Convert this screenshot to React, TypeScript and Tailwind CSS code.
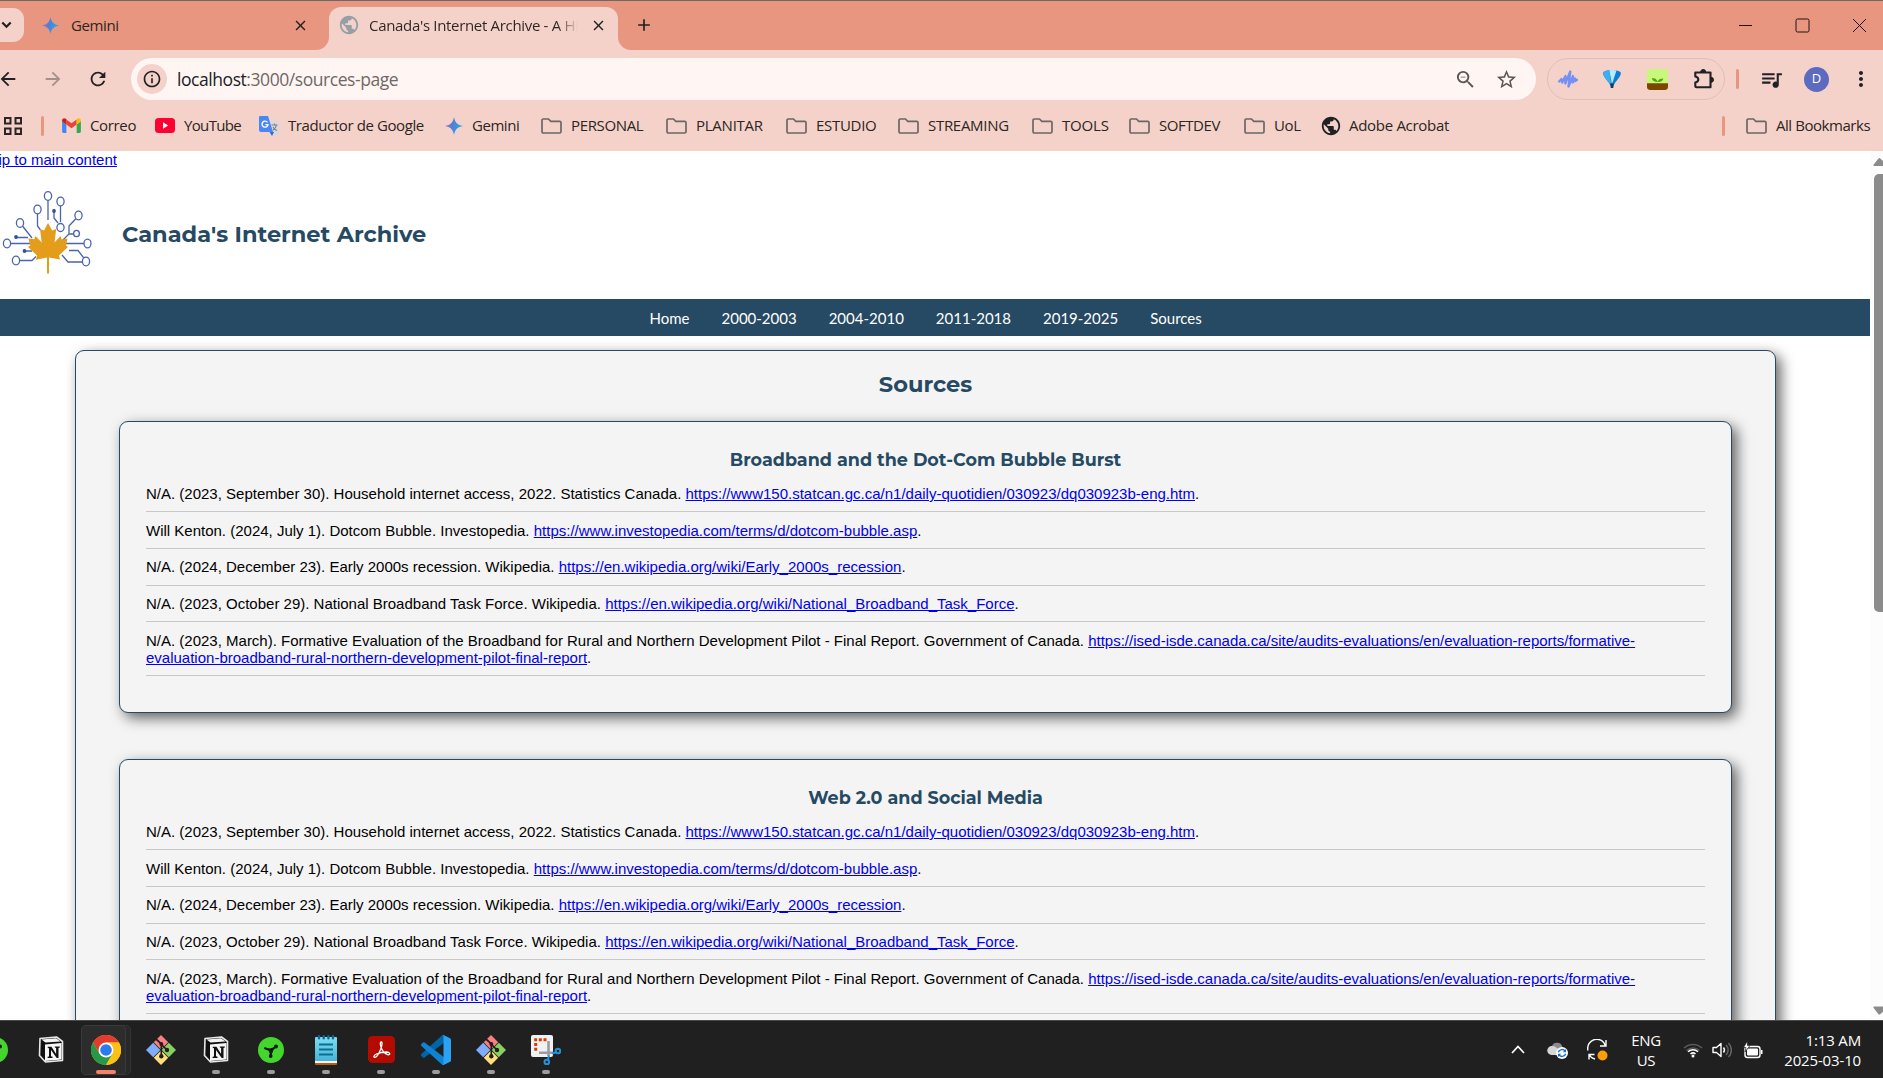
import React from "react";
import {
  MdArrowBack,
  MdArrowForward,
  MdRefresh,
  MdInfoOutline,
  MdStarBorder,
  MdZoomOut,
  MdQueueMusic,
  MdMoreVert,
  MdPublic,
  MdClose,
  MdAdd,
} from "react-icons/md";

const Gemini = ({ className }: { className: string }) => (
  <svg viewBox="0 0 20 20" className={className}>
    <defs>
      <linearGradient id="gem" x1="0" y1="0.4" x2="1" y2="0.6">
        <stop offset="0" stopColor="#b56fb0" />
        <stop offset="0.4" stopColor="#4f7fd8" />
        <stop offset="1" stopColor="#1fb0ea" />
      </linearGradient>
    </defs>
    <path fill="url(#gem)" d="M10 0c.9 5.8 4.200 9.100 10 10-5.800.9-9.100 4.200-10 10-.9-5.800-4.200-9.100-10-10 5.800-.9 9.100-4.200 10-10z" />
  </svg>
);

const Gmail = () => (
  <svg viewBox="0 0 20 16" className="h-[15px] w-[19px]">
    <path fill="#4285f4" d="M0 3.500 4.500 7v9H1.500A1.500 1.500 0 0 1 0 14.500z" />
    <path fill="#34a853" d="M20 3.500 15.500 7v9h3a1.500 1.500 0 0 0 1.500-1.500z" />
    <path fill="#ea4335" d="M4.500 1.500 10 5.600l5.500-4.100V7L10 11 4.500 7z" />
    <path fill="#c5221f" d="M0 2.500C0 .3 2.400-.6 4.500 1v6L0 3.600z" />
    <path fill="#fbbc04" d="M20 2.500c0-2.200-2.400-3.100-4.500-1.500v6L20 3.600z" />
  </svg>
);

const YouTube = () => (
  <svg viewBox="0 0 20 15" className="h-[15px] w-5">
    <rect width="20" height="15" rx="3.500" fill="#ff0033" />
    <path d="M8 4.300v6.400l5.200-3.200z" fill="#fff" />
  </svg>
);

const Translate = () => (
  <svg viewBox="0 0 20 20" className="h-5 w-5">
    <path d="M8 5h11a1 1 0 0 1 1 1v12a1 1 0 0 1-1 1h-8z" fill="#d9d9dc" />
    <path d="M10 15l3 5 2-4z" fill="#3367d6" />
    <path d="M1 0h8l5 16H2a2 2 0 0 1-2-2V1a1 1 0 0 1 1-1z" fill="#4a86f4" />
    <path d="M8.500 6.400A3 3 0 1 0 9 8.600H6.300" fill="none" stroke="#fff" strokeWidth="1.400" />
    <path d="M12.500 9h6M15.500 7.600V9m2 0c-.4 2.500-2 4-3.500 5m0-3c1 1.800 2.500 3 4 3.600" fill="none" stroke="#7d7f83" strokeWidth="1.100" />
  </svg>
);

const Folder = () => (
  <svg viewBox="0 0 21 16" className="h-4 w-[21px] shrink-0" fill="none" stroke="#6b6765" strokeWidth="1.700" strokeLinejoin="round">
    <path d="M2.300 1h5.200l2.300 2.300h8.900c.8 0 1.300.5 1.300 1.300v9c0 .8-.5 1.400-1.300 1.400H2.300c-.8 0-1.300-.6-1.300-1.400V2.300C1 1.500 1.500 1 2.300 1z" />
  </svg>
);

const bookmarks: { icon: React.ReactNode; label: string; width: string; text: string }[] = [
  { icon: <Gmail />, label: "Correo", width: "w-[93px]", text: "tracking-[-0.35px]" },
  { icon: <YouTube />, label: "YouTube", width: "w-[104px]", text: "tracking-[-0.65px]" },
  { icon: <Translate />, label: "Traductor de Google", width: "w-[186px]", text: "tracking-[-0.4px]" },
  { icon: <Gemini className="h-[18px] w-[18px]" />, label: "Gemini", width: "w-[96px]", text: "tracking-[-0.45px]" },
  { icon: <Folder />, label: "PERSONAL", width: "w-[125px]", text: "tracking-[-0.35px]" },
  { icon: <Folder />, label: "PLANITAR", width: "w-[120px]", text: "tracking-[-0.25px]" },
  { icon: <Folder />, label: "ESTUDIO", width: "w-[112px]", text: "tracking-[-0.3px]" },
  { icon: <Folder />, label: "STREAMING", width: "w-[134px]", text: "tracking-[-0.3px]" },
  { icon: <Folder />, label: "TOOLS", width: "w-[97px]", text: "tracking-[-0.2px]" },
  { icon: <Folder />, label: "SOFTDEV", width: "w-[115px]", text: "tracking-[-0.45px]" },
  { icon: <Folder />, label: "UoL", width: "w-[78px]", text: "tracking-[-0.4px]" },
  { icon: <MdPublic className="h-[22px] w-[22px] -mx-0.5 text-[#202124]" />, label: "Adobe Acrobat", width: "w-[130px]", text: "tracking-[-0.3px]" },
];

function TabStrip() {
  return (
    <div className="flex h-[50px] items-end border-t border-[#6c6a69] bg-[#e8967f] text-[15px] text-[#2b2523]">
      <div className="mb-2 flex h-[34px] w-6 items-center rounded-r-[11px] bg-[#f5d2c9]">
        <svg viewBox="0 0 11 8" className="ml-[1px] h-2 w-[11px]" fill="none" stroke="#202124" strokeWidth="2.200">
          <path d="M1.300 1.500l4.200 4.200 4.200-4.200" />
        </svg>
      </div>
      <div className="flex h-[50px] w-[292px] items-center pl-[18px]">
        <Gemini className="h-[17px] w-[17px]" />
        <span className="ml-3 tracking-[-0.4px]">Gemini</span>
        <MdClose className="ml-auto mr-[7px] h-[17px] w-[17px] text-[#202124]" />
      </div>
      <svg viewBox="0 0 13 13" className="h-[13px] w-[13px]">
        <path d="M13 0v13H0A13 13 0 0 0 13 0z" fill="#f5d2c9" />
      </svg>
      <div className="flex h-[43px] w-[289px] items-center rounded-t-[12px] bg-[#f5d2c9] pb-[7px] pl-[9px]">
        <MdPublic className="h-[22px] w-[22px] shrink-0 text-[#94a0a5]" />
        <div className="ml-[9px] w-[209px] overflow-hidden whitespace-nowrap bg-linear-to-r from-[#2b2523] from-90% to-transparent bg-clip-text tracking-[-0.32px] text-transparent">
          Canada's Internet Archive - A Hi
        </div>
        <MdClose className="ml-3 h-[17px] w-[17px] shrink-0 text-[#202124]" />
      </div>
      <svg viewBox="0 0 13 13" className="h-[13px] w-[13px]">
        <path d="M0 0v13h13A13 13 0 0 1 0 0z" fill="#f5d2c9" />
      </svg>
      <div className="flex h-[50px] w-[26px] items-center justify-center">
        <MdAdd className="h-5 w-5 shrink-0 text-[#202124]" />
      </div>
      <div className="ml-auto flex h-[50px] w-[145px] items-center justify-between pr-4">
        <svg viewBox="0 0 15 15" className="h-[15px] w-[15px]" stroke="#1b1512" fill="none">
          <path d="M1 7.500h13" />
        </svg>
        <svg viewBox="0 0 15 15" className="h-[15px] w-[15px]" stroke="#1b1512" fill="none">
          <rect x="1" y="1" width="13" height="13" rx="1.500" />
        </svg>
        <svg viewBox="0 0 15 15" className="h-[15px] w-[15px]" stroke="#1b1512" fill="none">
          <path d="M1 1l13 13M14 1L1 14" />
        </svg>
      </div>
    </div>
  );
}

function AddressRow() {
  return (
    <div className="flex h-[58px] items-center bg-[#f5d2c9] text-[#202124]">
      <MdArrowBack className="-ml-[3px] h-[22px] w-[22px]" />
      <MdArrowForward className="ml-[23px] h-[22px] w-[22px] text-[#a48f89]" />
      <MdRefresh className="ml-[23px] h-[22px] w-[22px]" />
      <div className="ml-[22px] flex h-[42px] w-[1405px] items-center rounded-full bg-[#fff6f4] pl-[6px] pr-[18px]">
        <div className="flex h-[30px] w-[30px] items-center justify-center rounded-full bg-[#f5d2c9]">
          <MdInfoOutline className="h-5 w-5" />
        </div>
        <div className="ml-[10px] text-[17.5px] tracking-[-0.44px] text-[#6f6866]">
          <span className="text-[#202124]">localhost</span>:3000/sources-page
        </div>
        <MdZoomOut className="ml-auto h-[23px] w-[23px] text-[#5c5654]" />
        <MdStarBorder className="ml-[18px] h-[23px] w-[23px] text-[#5c5654]" />
      </div>
      <div className="ml-[11px] flex h-[42px] w-[178px] items-center rounded-full border border-[#e2bfb6] pl-[10px]">
        <svg viewBox="0 0 20 20" className="h-5 w-5" fill="none" stroke="#7590f5" strokeWidth="2.300" strokeLinecap="round" strokeLinejoin="round">
          <path d="M1.200 12.500 3.500 10l.7 3.500L7.500 7l-.2 7.500L12.300 2.500 10.500 17.500 15 7l-.2 6.500L17 9.500l.3 2.500 1.700-1.200" />
        </svg>
        <svg viewBox="0 0 20 20" className="ml-[24px] h-5 w-5">
          <path d="M1.500 3C5 .3 15 .3 18.500 3c1.500 3-2.500 6.500-6.500 12.500H8C4 9.500 0 6 1.500 3z" fill="#0b7fd6" />
          <path d="M7.200 1.300c2-.5 5.500-.4 7.300.3L10 15z" fill="#b5ebff" />
          <path d="M1.500 3C3 1.800 5 1.300 7.200 1.200L9.500 15.500H8C4 9.500 0 6 1.500 3z" fill="#3aaef0" />
          <path d="M8 14.500h4l-.8 4.500H8.800z" fill="#123a5c" />
        </svg>
        <svg viewBox="0 0 20 20" className="ml-[25px] h-[21px] w-[21px]">
          <rect width="20" height="20" rx="3" fill="#c9f77c" />
          <path d="M0 13.500h20V17a3 3 0 0 1-3 3H3a3 3 0 0 1-3-3z" fill="#7d4600" />
          <path d="M10 14c0-2 .5-3 1.500-4 1.300-1 2.500-1 4-1-.3 2-2 3.200-5 3.400C7 12 5 11 4.600 8.500c3 0 4.600 1 5.400 3.500z" fill="#4ea60f" />
        </svg>
        <svg viewBox="0 0 22 22" className="ml-[25px] h-[22px] w-[22px]">
          <path d="M3.500 4.500h14v14.700h-14a1.200 1.200 0 0 1-1.200-1.200v-3.500c2.200-.5 3-1.500 3-3s-.8-2.500-3-3V4.500z" fill="none" stroke="#202124" strokeWidth="2.100" strokeLinejoin="round" />
          <path d="M7.700 4a2.500 2.500 0 0 1 5 0zM18 9.300a2.500 2.500 0 0 1 0 5z" fill="#202124" stroke="#202124" />
        </svg>
      </div>
      <div className="ml-[11px] h-5 w-[3px] rounded-full bg-[#e8967f]" />
      <MdQueueMusic className="ml-[20px] h-[25px] w-[25px]" />
      <div className="ml-[20px] flex h-[25px] w-[25px] items-center justify-center rounded-full bg-[#5c6bc0] text-[13px] text-white">D</div>
      <MdMoreVert className="ml-5 h-6 w-6" />
    </div>
  );
}

function BookmarksBar() {
  return (
    <div className="flex h-[43px] items-center bg-[#f5d2c9] pb-[8px] text-[15px] text-[#2b2523]">
      <svg viewBox="0 0 18 18" className="ml-1 h-[18px] w-[18px] shrink-0" fill="none" stroke="#2b2523" strokeWidth="2">
        <rect x="1" y="1" width="5.500" height="5.500" />
        <rect x="11.500" y="1" width="5.500" height="5.500" />
        <rect x="1" y="11.500" width="5.500" height="5.500" />
        <rect x="11.500" y="11.500" width="5.500" height="5.500" />
      </svg>
      <div className="ml-[19px] mr-[18px] h-5 w-[3px] rounded-full bg-[#e8967f]" />
      {bookmarks.map((b) => (
        <div key={b.label} className={`flex shrink-0 items-center whitespace-nowrap ${b.width}`}>
          {b.icon}
          <span className={`ml-[9px] ${b.text}`}>{b.label}</span>
        </div>
      ))}
      <div className="ml-auto mr-[21px] h-5 w-[3px] rounded-full bg-[#e8967f]" />
      <Folder />
      <span className="ml-[9px] w-[107px] whitespace-nowrap tracking-[-0.45px]">All Bookmarks</span>
    </div>
  );
}

const Logo = () => (
  <svg viewBox="0 0 90 86" className="h-[86px] w-[90px] shrink-0">
    <g fill="none" stroke="#4a63ae" strokeWidth="1.300">
      <path d="M46 9.500V31M35.500 22.500V37l3 4M58.500 14.500V33M52 20v9l4 5M20.500 37 30 49M74.500 29 67 37v8l-8 8M67 45h5M13 48.500h13M9 54.500h20M64 54.500h19M22 62h8M16 71.500h14l4-4M67 61.500h9l7 9M60 66l6 7h15" />
      <g fill="#fff">
        <ellipse cx="46" cy="7" rx="3.600" ry="4.300" />
        <ellipse cx="35.500" cy="20.500" rx="3.600" ry="4.300" />
        <ellipse cx="58.500" cy="12.500" rx="3.600" ry="4.300" />
        <ellipse cx="58.500" cy="38.500" rx="3.600" ry="4" />
        <ellipse cx="18" cy="34" rx="3.600" ry="4.300" />
        <ellipse cx="76.500" cy="26.500" rx="3.600" ry="4.300" />
        <ellipse cx="74.500" cy="44.500" rx="2.900" ry="3.200" />
        <ellipse cx="5" cy="54.500" rx="3.600" ry="4.300" />
        <ellipse cx="85.500" cy="54.500" rx="3.500" ry="4.300" />
        <ellipse cx="14" cy="71.500" rx="3.600" ry="4.300" />
        <ellipse cx="84" cy="72.500" rx="3.600" ry="4.300" />
      </g>
    </g>
    <g fill="#3450a4">
      <circle cx="52" cy="22" r="1.900" />
      <circle cx="14" cy="48" r="1.900" />
      <circle cx="22.500" cy="62" r="1.900" />
    </g>
    <path
      fill="#e39d1b"
      d="M46 34l4.200 7.500 4-1.500-1.700 13.500 6-6.500 1.200 3.500 5.800-.8-1.600 6.800 2 1.500-8.900 8.500 1 4-11-2v16h-2V68.500l-11 2.300 1-4.300-9-8.500 2.300-1.500-2-7 6 .8 1.200-3.300 6.200 6.500L38 40l4 1.500z"
    />
  </svg>
);

type Source = { text: string; url: string };

const sources: Source[] = [
  {
    text: "N/A. (2023, September 30). Household internet access, 2022. Statistics Canada.",
    url: "https://www150.statcan.gc.ca/n1/daily-quotidien/030923/dq030923b-eng.htm",
  },
  {
    text: "Will Kenton. (2024, July 1). Dotcom Bubble. Investopedia.",
    url: "https://www.investopedia.com/terms/d/dotcom-bubble.asp",
  },
  {
    text: "N/A. (2024, December 23). Early 2000s recession. Wikipedia.",
    url: "https://en.wikipedia.org/wiki/Early_2000s_recession",
  },
  {
    text: "N/A. (2023, October 29). National Broadband Task Force. Wikipedia.",
    url: "https://en.wikipedia.org/wiki/National_Broadband_Task_Force",
  },
  {
    text: "N/A. (2023, March). Formative Evaluation of the Broadband for Rural and Northern Development Pilot - Final Report. Government of Canada.",
    url: "https://ised-isde.canada.ca/site/audits-evaluations/en/evaluation-reports/formative-evaluation-broadband-rural-northern-development-pilot-final-report",
  },
];

function SourceCard({ title }: { title: string }) {
  return (
    <section className="mx-[43px] mb-[46px] h-[292px] shrink-0 rounded-[9px] border border-[#264a63] bg-[#f4f4f4] px-[26px] pt-[27px] shadow-[5px_5px_14px_rgba(0,0,0,0.6)]">
      <h3 className="text-center font-[Montserrat,Inter,sans-serif] text-[17.550px] leading-[22px] font-bold text-[#264a63]">{title}</h3>
      <ul className="mt-[4.400px] text-[15px] leading-[17px] text-black">
        {sources.map((s) => (
          <li key={s.url} className="border-b border-[#c8c8c8] pt-[9.400px] pb-[9.350px]">
            {s.text}{" "}
            <a href="#" className="text-[#0000ee] underline">
              {s.url}
            </a>
            .
          </li>
        ))}
      </ul>
    </section>
  );
}

function Page() {
  return (
    <div className="flex h-[869px] overflow-hidden bg-white font-['Liberation_Sans',Arial,sans-serif]">
      <div className="flex w-[1870px] flex-col overflow-hidden">
        <a href="#" className="-ml-[19px] h-[26px] shrink-0 text-[15px] leading-[18px] whitespace-nowrap text-[#0000ee] underline">
          Skip to main content
        </a>
        <header className="flex h-[122px] shrink-0 items-start pt-[12px] pl-[2px]">
          <Logo />
          <h1 className="mt-[30px] ml-[30px] font-[Montserrat,Inter,sans-serif] text-[22.500px] leading-[30px] font-bold text-[#264a63]">Canada's Internet Archive</h1>
        </header>
        <nav className="flex h-[37px] shrink-0 items-center gap-8 bg-[#264a63] pt-px pl-[649.500px] font-[Lato,sans-serif] text-[15px] text-white">
          {["Home", "2000-2003", "2004-2010", "2011-2018", "2019-2025", "Sources"].map((n) => (
            <a key={n} href="#">
              {n}
            </a>
          ))}
        </nav>
        <main className="mt-[14px] ml-[75px] flex h-[900px] w-[1701px] shrink-0 flex-col rounded-[9px] border border-[#264a63] bg-[#f4f4f4] shadow-[5px_5px_14px_rgba(0,0,0,0.6)]">
          <h2 className="mt-[18px] mb-[22px] text-center font-[Montserrat,Inter,sans-serif] text-[22.500px] leading-[30px] font-bold text-[#264a63]">Sources</h2>
          <SourceCard title="Broadband and the Dot-Com Bubble Burst" />
          <SourceCard title="Web 2.0 and Social Media" />
        </main>
      </div>
      <div className="flex w-[13px] flex-col items-end overflow-hidden bg-[#fcfcfc]">
        <svg viewBox="0 0 10 9" className="mt-[7px] h-[9px] w-[10px] shrink-0">
          <path d="M1 8h10V4L7.500.7a1.500 1.500 0 0 0-2.200 0L.7 6.500C.3 7.300.4 8 1 8z" fill="#8b8b8b" />
        </svg>
        <div className="mt-[7px] h-[438px] w-[9px] shrink-0 rounded-l-[5px] bg-[#8b8b8b]" />
        <svg viewBox="0 0 10 9" className="mt-auto mb-[5px] h-[9px] w-[10px] shrink-0">
          <path d="M1 .5h10V5L7.500 8a1.500 1.500 0 0 1-2.200 0L.7 2C.3 1.200.4.5 1 .5z" fill="#8b8b8b" />
        </svg>
      </div>
    </div>
  );
}

const Notion = () => (
  <svg viewBox="0 0 26 27" className="h-[27px] w-[26px]">
    <path d="M2 2.500 18.500 1 24.500 5.500v19L7.500 26 1.500 19.500z" fill="#111" stroke="#e8e8e8" strokeWidth="1.600" strokeLinejoin="round" />
    <path d="M3.500 3.400 18 2.200l4.500 3.200L7.500 6.600z" fill="#f4f4f4" />
    <path d="M7 8.500 23.500 7v16.500L7 25z" fill="#f6f6f6" />
    <path d="M9.800 10.800h3.700l4.600 7.200v-6l-1.300-.4v-1.200h5v1.200l-1.300.4v10h-1.800L13 14v6.300l1.500.4V22H9.600v-1.200l1.400-.4V12.300l-1.200-.3z" fill="#111" />
  </svg>
);

const Chrome = () => (
  <svg viewBox="0 0 48 48" className="h-[30px] w-[30px]">
    <circle cx="24" cy="24" r="24" fill="#fbc116" />
    <path d="M3.200 12A24 24 0 0 1 44.800 12H24L13.600 30z" fill="#e33b2e" />
    <path d="M3.200 12A24 24 0 0 0 24 48l10.400-18H13.600z" fill="#279847" />
    <path d="M44.800 12A24 24 0 0 1 24 48l10.400-18L24 12z" fill="#fbc116" />
    <circle cx="24" cy="24" r="12" fill="#fff" />
    <circle cx="24" cy="24" r="9.300" fill="#2a7bec" />
  </svg>
);

const Git = () => (
  <svg viewBox="0 0 30 30" className="h-[30px] w-[30px]">
    <path d="M15 0l7.200 7.200L15 14.400 7.800 7.200z" fill="#fb7e80" />
    <path d="M7.200 7.800l7.200 7.200-7.200 7.200L0 15z" fill="#7fadfb" />
    <path d="M22.800 7.800L30 15l-7.200 7.200-7.200-7.200z" fill="#86d160" />
    <path d="M15 15.600l7.200 7.200L15 30l-7.200-7.200z" fill="#fde07c" />
    <path d="M10 4l5.300 4.800V21M15.500 9.500l5.500 5.500" fill="none" stroke="#231f20" strokeWidth="1.700" />
    <g fill="#231f20">
      <circle cx="15.300" cy="9" r="2" />
      <circle cx="21" cy="15" r="2.200" />
      <circle cx="15.300" cy="21.300" r="2.200" />
    </g>
  </svg>
);

const Razer = () => (
  <svg viewBox="0 0 26 26" className="h-[26px] w-[26px]">
    <circle cx="13" cy="13" r="13" fill="#44d62c" />
    <path d="M13 13.500 18 9.500M13 13.500 7 11.300M13 13.500l-.3 5.500" stroke="#101a10" strokeWidth="2.200" strokeLinecap="round" />
    <path d="M10 11.800 16 10.500l-1.500 5.500h-3z" fill="#101a10" />
    <circle cx="18" cy="9.500" r="2" fill="#101a10" />
    <circle cx="12.700" cy="19" r="1.900" fill="#101a10" />
  </svg>
);

const Notepad = () => (
  <svg viewBox="0 0 22 30" className="h-[30px] w-[22px]">
    <defs>
      <linearGradient id="np" x1="0" y1="0" x2="0" y2="1">
        <stop offset="0" stopColor="#7fdcf0" />
        <stop offset="1" stopColor="#46b4d8" />
      </linearGradient>
    </defs>
    <rect y="25" width="22" height="5" rx="1" fill="#b3610f" />
    <rect y="24" width="22" height="4" fill="#f2f2f2" />
    <rect y="2" width="22" height="24" rx="1" fill="url(#np)" />
    <path d="M4 1.200v2M8.700 1.200v2M13.400 1.200v2M18 1.200v2" stroke="#0b6a91" strokeWidth="2.400" strokeLinecap="round" />
    <path d="M4 9.500h14M4 14.500h14M4 19.500h14" stroke="#0d6e93" strokeWidth="2" />
  </svg>
);

const Acrobat = () => (
  <svg viewBox="0 0 27 27" className="h-[27px] w-[27px]">
    <rect width="27" height="27" rx="4.500" fill="#b30b00" />
    <path
      d="M13.300 6c-1.700 0-1 4.500 1 8 1.400 2.400 4.500 5 6.500 4.700 1.800-.4 1-2.600-2.300-2.700-3.500 0-7 .7-10 2-2.500 1.200-3.300 3-2 3.300 2 .3 4.800-4.600 6.300-8.300C13.800 10.400 14.700 6 13.300 6z"
      fill="none"
      stroke="#fff"
      strokeWidth="1.300"
    />
  </svg>
);

const VSCode = () => (
  <svg viewBox="0 0 100 100" className="h-[30px] w-[30px]">
    <path d="M96.500 10.800 75.900.9a6.200 6.200 0 0 0-7.100 1.200L1.300 63.600a4.200 4.200 0 0 0 0 6.200l5.500 5a4.200 4.200 0 0 0 5.300.2L93.400 13.400c2.700-2.100 6.600-.1 6.600 3.300v-.2a6.200 6.200 0 0 0-3.500-5.700z" fill="#0065a9" />
    <path d="M96.500 89.200 75.900 99.100a6.200 6.200 0 0 1-7.100-1.200L1.300 36.400a4.200 4.200 0 0 1 0-6.200l5.500-5a4.200 4.200 0 0 1 5.300-.2l81.300 61.600c2.700 2.100 6.600.1 6.600-3.300v.2a6.200 6.200 0 0 1-3.500 5.700z" fill="#0f82d2" />
    <path d="M75.900 99.100a6.200 6.200 0 0 1-7.100-1.200c2.300 2.300 6.200.7 6.200-2.600V4.700c0-3.300-3.900-4.900-6.200-2.600A6.200 6.200 0 0 1 75.900.9l20.600 9.900a6.200 6.200 0 0 1 3.500 5.700v67a6.200 6.200 0 0 1-3.500 5.700z" fill="#2ba3f5" />
  </svg>
);

const Snip = () => (
  <svg viewBox="0 0 30 30" className="h-[30px] w-[30px]">
    <rect width="22" height="22" rx="2" fill="#f1f1f3" />
    <path d="M15.500 4.800H3.200M4.700 8v8.500" fill="none" stroke="#d83b01" strokeWidth="3" strokeDasharray="3 1.700" />
    <path d="M17.500 6v15M8 17.800h14" stroke="#9a9da3" strokeWidth="2.600" />
    <g fill="none" stroke="#2294dc" strokeWidth="2">
      <circle cx="27" cy="16" r="2.300" />
      <circle cx="15.800" cy="27" r="2.300" />
      <path d="M25 17.300 21 18.500M17 25l1-4.500" />
    </g>
  </svg>
);

const apps: { id: string; icon: React.ReactNode; open: boolean }[] = [
  { id: "notion", icon: <Notion />, open: false },
  { id: "chrome", icon: <Chrome />, open: true },
  { id: "git", icon: <Git />, open: false },
  { id: "notion-window", icon: <Notion />, open: true },
  { id: "razer", icon: <Razer />, open: true },
  { id: "notepad", icon: <Notepad />, open: true },
  { id: "acrobat", icon: <Acrobat />, open: true },
  { id: "vscode", icon: <VSCode />, open: true },
  { id: "git-bash", icon: <Git />, open: true },
  { id: "snip", icon: <Snip />, open: true },
];

function Taskbar() {
  return (
    <div className="flex h-[58px] items-center overflow-hidden border-t border-[#4a4a4a] bg-[#202020] text-[15px] text-white">
      <div className="-ml-[18px] w-[41.500px] shrink-0">
        <Razer />
      </div>
      {apps.map((a) =>
        a.id === "chrome" ? (
          <div key={a.id} className="w-[55px] shrink-0 pl-[2.500px]">
            <div className="h-[50px] w-[50px] rounded-[5px] border border-[#353535] bg-[#282828]">
              <div className="-mt-px -ml-px flex h-[50px] w-[45px] flex-col items-center rounded-[5px] border border-[#3a3a3a] bg-[#2c2c2c] pl-[4px]">
                <div className="mt-[9px]">{a.icon}</div>
                <div className="mt-[5px] h-1 w-5 rounded-full bg-[#f58168]" />
              </div>
            </div>
          </div>
        ) : (
          <div key={a.id} className="flex h-[50px] w-[55px] shrink-0 flex-col items-center">
            <div className="mt-[10px] flex h-[30px] items-center">{a.icon}</div>
            {a.open && <div className="mt-[5px] h-1 w-2 rounded-full bg-[#9c9c9c]" />}
          </div>
        )
      )}
      <div className="ml-auto flex h-full items-center">
        <svg viewBox="0 0 14 9" className="mr-[22px] h-[9px] w-[14px]" fill="none" stroke="#fff" strokeWidth="1.700">
          <path d="M1 8l6-6.500L13 8" />
        </svg>
        <svg viewBox="0 0 21 18" className="mr-[19px] h-[18px] w-[21px]">
          <path d="M5 5a5.500 5.500 0 0 1 10.500 1.500A4.500 4.500 0 0 1 17 13H8z" fill="#8b8b8b" />
          <path d="M4.500 14A4.500 4.500 0 0 1 5 5c3 0 5 2 7 4v5z" fill="#d6d6d6" />
          <circle cx="15" cy="12" r="6" fill="#fff" />
          <path d="M11.300 11.300a3.900 3.900 0 0 1 7-1M18.700 12.700a3.900 3.900 0 0 1-7 1" fill="none" stroke="#1771c6" strokeWidth="1.400" />
          <path d="M19 8v3.200h-3.200zM11 16v-3.200h3.200z" fill="#1771c6" />
        </svg>
        <svg viewBox="0 0 21 22" className="h-[22px] w-[21px]" fill="none" stroke="#fff" strokeWidth="1.400">
          <path d="M1 11.500A9 9 0 0 1 18.500 7M19 1v6h-6M8 20a9 9 0 0 1-6-4.500M2 20.500v-5h5.500" />
          <circle cx="15.500" cy="16.500" r="5" fill="#ff9c0a" stroke="none" />
        </svg>
        <div className="w-[76px] text-center leading-[20px] tracking-[-0.3px]">
          ENG
          <br />
          US
        </div>
        <svg viewBox="0 0 20 16" className="-ml-px h-4 w-5" fill="none" strokeWidth="1.500">
          <path d="M1 6a13 13 0 0 1 18 0M3.500 8.500a9.500 9.500 0 0 1 13 0" stroke="#5a5a5a" />
          <path d="M5 9.800a7 7 0 0 1 10 0M7.500 12a3.700 3.700 0 0 1 5 0" stroke="#fff" />
          <circle cx="10" cy="14" r="1.500" fill="#fff" />
        </svg>
        <svg viewBox="0 0 20 18" className="ml-[9px] h-[18px] w-5" fill="none" strokeWidth="1.400">
          <path d="M1 6.500h3.500L9 2.500v13l-4.500-4H1z" stroke="#fff" strokeLinejoin="round" />
          <path d="M11.500 6.500a4 4 0 0 1 0 5" stroke="#fff" />
          <path d="M14 4a7 7 0 0 1 0 10M16.500 2a10 10 0 0 1 0 14" stroke="#666" />
        </svg>
        <svg viewBox="0 0 20 18" className="ml-[11px] h-[18px] w-5">
          <rect x="2" y="5.500" width="15" height="11" rx="2.500" fill="none" stroke="#fff" strokeWidth="1.400" />
          <rect x="4" y="7.500" width="11" height="7" rx="1" fill="#fff" />
          <path d="M18 9v4h1.500V9z" fill="#fff" />
          <path d="M4.500 0 .5 6.500H3L2 11l5-6.500H4.500z" fill="#fff" stroke="#202020" strokeWidth=".7" />
        </svg>
        <div className="mr-[22px] w-[98px] text-right text-[15px] leading-[20px] tracking-[-0.15px]">
          1:13 AM
          <br />
          2025-03-10
        </div>
      </div>
    </div>
  );
}

export default function App() {
  return (
    <div className="h-[1078px] w-[1883px] overflow-hidden font-['Segoe_UI','Open_Sans',sans-serif]">
      <TabStrip />
      <AddressRow />
      <BookmarksBar />
      <Page />
      <Taskbar />
    </div>
  );
}
